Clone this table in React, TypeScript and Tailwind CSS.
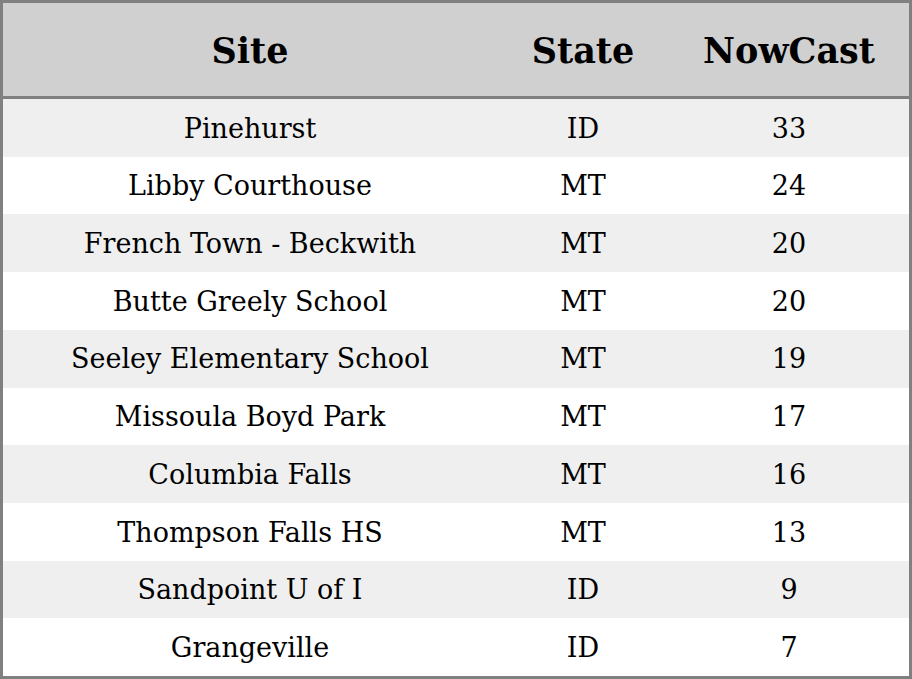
const rows: [string, string, string][] = [
  ['Pinehurst', 'ID', '33'],
  ['Libby Courthouse', 'MT', '24'],
  ['French Town - Beckwith', 'MT', '20'],
  ['Butte Greely School', 'MT', '20'],
  ['Seeley Elementary School', 'MT', '19'],
  ['Missoula Boyd Park', 'MT', '17'],
  ['Columbia Falls', 'MT', '16'],
  ['Thompson Falls HS', 'MT', '13'],
  ['Sandpoint U of I', 'ID', '9'],
  ['Grangeville', 'ID', '7'],
]

export default function App() {
  return (
    <div className="flex h-[679px] w-[912px] flex-col border-[3px] border-[#808080] font-['DejaVu_Serif',serif] text-black">
      {/* header */}
      <div className="flex h-[96px] shrink-0 items-center border-b-[3px] border-[#808080] bg-[#d0d0d0] pt-[3px] text-[35px] font-bold">
        <div className="w-[494px] text-center">Site</div>
        <div className="w-[172px] text-center">State</div>
        <div className="flex-1 text-center">NowCast</div>
      </div>

      {rows.map(([site, state, val], i) => (
        <div
          key={site}
          className={`flex flex-1 items-center pt-[2px] text-[27px] ${i % 2 === 0 ? 'bg-[#efefef]' : 'bg-white'}`}
        >
          <div className="w-[494px] text-center">{site}</div>
          <div className="w-[172px] text-center">{state}</div>
          <div className="flex-1 text-center">{val}</div>
        </div>
      ))}
    </div>
  )
}
